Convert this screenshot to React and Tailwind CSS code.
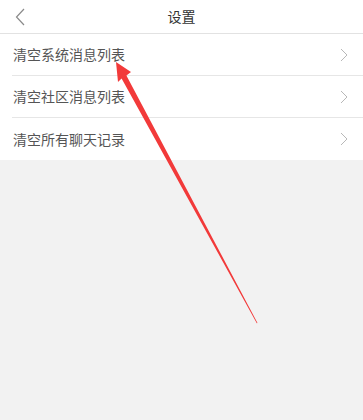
import React from 'react';

const items = ['清空系统消息列表', '清空社区消息列表', '清空所有聊天记录'];

const ChevronRight = () => (
  <svg width="8" height="14" viewBox="0 0 8 14" className="shrink-0">
    <path d="M1 1 L7 7 L1 13" fill="none" stroke="#b8b8b8" strokeWidth="1" />
  </svg>
);

const App = () => {
  return (
    <div
      className="relative w-[363px] h-[420px] bg-[#f2f2f2] overflow-hidden"
      style={{ fontFamily: '"Noto Sans CJK SC", "Noto Sans", sans-serif' }}
    >
      {/* Header */}
      <div className="h-[34px] bg-white border-b border-[#e2e2e2] flex items-center relative">
        <div className="w-[40px] pl-[15px] flex items-center">
          <svg width="11" height="18" viewBox="0 0 11 18">
            <path d="M9 1 L1.5 9 L9 17" fill="none" stroke="#8a8a8a" strokeWidth="1.2" />
          </svg>
        </div>
        <div className="flex-1 text-center text-[14px] text-[#333] pr-[40px]">设置</div>
      </div>

      {/* Items */}
      <div className="bg-white">
        {items.map((label, i) => (
          <div key={label} className="pl-[12px]">
            <div
              className={`h-[42px] flex items-center justify-between pr-[15px] ${
                i < items.length - 1 ? 'border-b border-[#e6e6e6]' : ''
              }`}
            >
              <span className="text-[14px] text-[#555] pl-[1px]">{label}</span>
              <ChevronRight />
            </div>
          </div>
        ))}
      </div>

      {/* Red annotation arrow */}
      <svg className="absolute inset-0 pointer-events-none" width="363" height="420" viewBox="0 0 363 420">
        <polygon
          points="116,62 131,72 126.4,75.6 257.5,323 256.8,323.3 121.6,78.4 118,82"
          fill="#f23a3a"
        />
      </svg>
    </div>
  );
};

export default App;
